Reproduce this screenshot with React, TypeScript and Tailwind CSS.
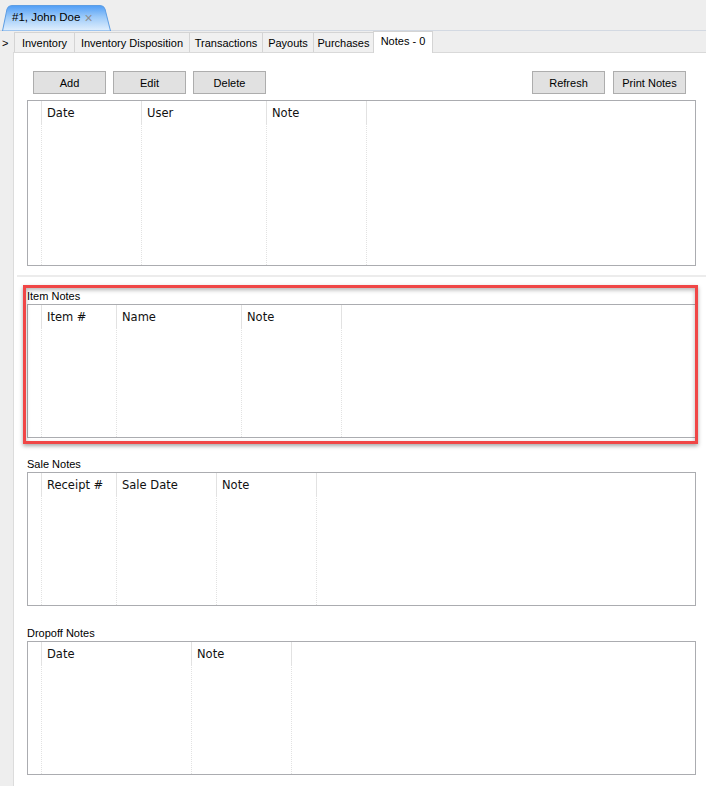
import React from 'react';

interface Col {
    label: string;
    w: string;
}

const Grid: React.FC<{cols: Col[]; h: string}> = ({cols, h}) => (
    <div className={`${h} flex border border-[#abacb0] bg-white`}>
        <div className="w-[14px] shrink-0 flex flex-col">
            <div className="h-[23px] border-r border-[#e2e2e2]" />
            <div className="flex-1 border-r border-dotted border-[#e2e2e2]" />
        </div>
        {cols.map((c) => (
            <div key={c.label} className={`${c.w} shrink-0 flex flex-col`}>
                <div className="h-[23px] border-r border-[#e2e2e2] pl-[5px] pt-[4px] font-['DejaVu_Sans',sans-serif] text-[11.5px] leading-[16px] text-[#111]">
                    {c.label}
                </div>
                <div className="flex-1 border-r border-dotted border-[#e2e2e2]" />
            </div>
        ))}
        <div className="flex-1" />
    </div>
);

const Btn: React.FC<{label: string}> = ({label}) => (
    <button className="w-[73px] h-[23px] border border-[#adadad] bg-[#e1e1e1] text-[11px] leading-[14px] text-black">
        {label}
    </button>
);

const Label: React.FC<{text: string}> = ({text}) => (
    <div className="h-[14px] leading-[14px] mb-[1px] text-[11px] text-black">{text}</div>
);

const subTabs = [
    {label: 'Inventory', w: 'w-[60px]'},
    {label: 'Inventory Disposition', w: 'w-[115px]'},
    {label: 'Transactions', w: 'w-[73px]'},
    {label: 'Payouts', w: 'w-[51px]'},
    {label: 'Purchases', w: 'w-[60px]'},
];

const App: React.FC = () => {
    return (
        <div className="w-[706px] h-[786px] overflow-hidden bg-[#eeeeee] font-['Liberation_Sans',Arial,sans-serif] text-[11px] text-black">
            {/* document tab strip */}
            <div className="h-[31px] border-b border-[#d3d9e2] pl-[2px] pt-[5px] flex">
                <div className="relative w-[110px] h-[25px] flex items-center pl-[10px]">
                    <svg className="absolute inset-0" width="110" height="26" viewBox="0 0 110 26">
                        <defs>
                            <linearGradient id="tabg" x1="0" y1="0" x2="0" y2="1">
                                <stop offset="0" stopColor="#4f9df6" />
                                <stop offset="0.45" stopColor="#9ccaf9" />
                                <stop offset="1" stopColor="#e3f0fd" />
                            </linearGradient>
                        </defs>
                        <path d="M0.5 26 L5 4 Q6 0.5 10 0.5 L98 0.5 Q102 0.5 103 4 L108.5 26 Z" fill="url(#tabg)" stroke="#5d9de3" strokeWidth="1" />
                    </svg>
                    <span className="relative text-[11.5px]">#1, John Doe</span>
                    <span className="relative ml-[4px] text-[14px] leading-[14px] text-[#8d8d8d]">×</span>
                </div>
            </div>

            <div className="flex h-[755px]">
                <div className="w-[13px] shrink-0 pt-[5px] pl-[2px] leading-[14px]">&gt;</div>

                <div className="flex-1 flex flex-col">
                    {/* sub tabs */}
                    <div className="h-[22px] flex items-end border-b border-[#d9d9d9]">
                        <div className="w-[1px]" />
                        {subTabs.map((t) => (
                            <div key={t.label} className={`${t.w} h-[20px] border-l border-t border-[#d4d4d4] bg-[#f0f0f0] flex items-center justify-center pt-[1px]`}>
                                {t.label}
                            </div>
                        ))}
                        <div className="relative w-[60px] h-[22px] -mb-[1px] border-l border-r border-t border-[#d4d4d4] bg-white flex items-center justify-center pb-[2px]">
                            Notes - 0
                        </div>
                    </div>

                    {/* notes panel */}
                    <div className="flex-1 bg-white border-l border-[#dcdcdc] pl-[13px] pr-[10px] pt-[18px]">
                        <div className="flex justify-between pl-[6px] pr-[10px]">
                            <div className="flex gap-[7px]">
                                <Btn label="Add" />
                                <Btn label="Edit" />
                                <Btn label="Delete" />
                            </div>
                            <div className="flex gap-[8px]">
                                <Btn label="Refresh" />
                                <Btn label="Print Notes" />
                            </div>
                        </div>

                        <div className="mt-[6px]">
                            <Grid
                                h="h-[166px]"
                                cols={[
                                    {label: 'Date', w: 'w-[100px]'},
                                    {label: 'User', w: 'w-[125px]'},
                                    {label: 'Note', w: 'w-[100px]'},
                                ]}
                            />
                        </div>

                        <div className="h-[2px] bg-[#ececec] mt-[9px] -ml-[10px] -mr-[10px]" />

                        <div className="relative mt-[12px]">
                            <Label text="Item Notes" />
                            <Grid
                                h="h-[134px]"
                                cols={[
                                    {label: 'Item #', w: 'w-[75px]'},
                                    {label: 'Name', w: 'w-[125px]'},
                                    {label: 'Note', w: 'w-[100px]'},
                                ]}
                            />
                            <div className="absolute -left-[4px] -top-[4px] -right-[2px] -bottom-[6px] border-[3px] border-[#f04646] shadow-[0_2px_4px_rgba(0,0,0,0.35),inset_0_2px_4px_rgba(0,0,0,0.3)] pointer-events-none" />
                        </div>

                        <div className="mt-[19px]">
                            <Label text="Sale Notes" />
                            <Grid
                                h="h-[134px]"
                                cols={[
                                    {label: 'Receipt #', w: 'w-[75px]'},
                                    {label: 'Sale Date', w: 'w-[100px]'},
                                    {label: 'Note', w: 'w-[100px]'},
                                ]}
                            />
                        </div>

                        <div className="mt-[20px]">
                            <Label text="Dropoff Notes" />
                            <Grid
                                h="h-[134px]"
                                cols={[
                                    {label: 'Date', w: 'w-[150px]'},
                                    {label: 'Note', w: 'w-[100px]'},
                                ]}
                            />
                        </div>
                    </div>
                </div>
            </div>
        </div>
    );
};

export default App;
